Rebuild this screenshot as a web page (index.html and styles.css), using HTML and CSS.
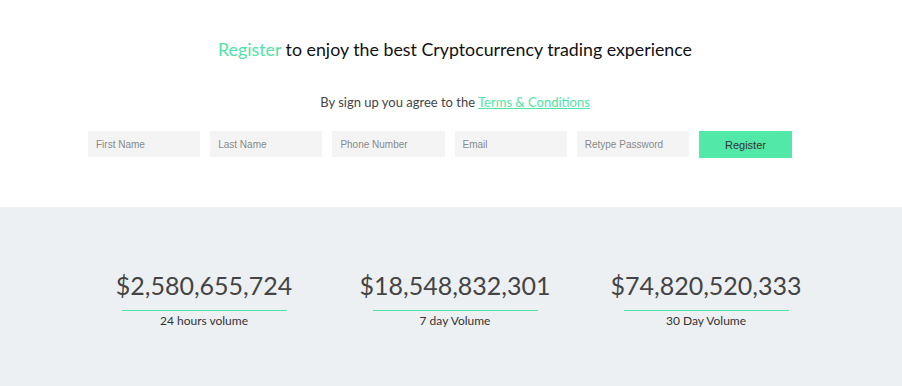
FILE: index.html
```html
<!DOCTYPE html>
<html lang="en">
<head>
    <meta charset="UTF-8">
    <meta name="viewport" content="width=device-width, initial-scale=1.0">
    <title>Register</title>
    <link rel="stylesheet" href="styles.css">
</head>
<body>
<div class="signup">
    <h2 class="signup-title"><span class="green">Register</span> to enjoy the best Cryptocurrency trading experience</h2>
    <p class="signup-terms">By sign up you agree to the <a href="#">Terms &amp; Conditions</a></p>
    <form class="signup-form">
        <input type="text" placeholder="First Name">
        <input type="text" placeholder="Last Name">
        <input type="text" placeholder="Phone Number">
        <input type="text" placeholder="Email">
        <input type="password" placeholder="Retype Password">
        <button type="button">Register</button>
    </form>
</div>
<div class="stats">
    <div class="stat">
        <div class="stat-value">$2,580,655,724</div>
        <div class="stat-label">24 hours volume</div>
    </div>
    <div class="stat">
        <div class="stat-value">$18,548,832,301</div>
        <div class="stat-label">7 day Volume</div>
    </div>
    <div class="stat">
        <div class="stat-value">$74,820,520,333</div>
        <div class="stat-label">30 Day Volume</div>
    </div>
</div>
</body>
</html>
```

FILE: styles.css
```css
body {
    margin: 0;
    font-family: Lato, "Open Sans", sans-serif;
    background-color: #fff;
    color: #222;
}
.green {
    color: #50e3a4;
}
.signup {
    height: 207px;
    box-sizing: border-box;
    padding-top: 38px;
    padding-left: 8px;
    text-align: center;
}
.signup-title {
    margin: 0;
    font-size: 17.8px;
    font-weight: 400;
    line-height: 22px;
    color: #111;
}
.signup-terms {
    margin: 34px 0 0;
    font-size: 13px;
    line-height: 16px;
    color: #444;
}
.signup-terms a {
    color: #50e3a4;
}
.signup-form {
    display: flex;
    gap: 10px;
    margin-top: 21px;
    padding-left: 80px;
}
.signup-form input {
    width: 112.2px;
    height: 26px;
    box-sizing: border-box;
    border: none;
    background-color: #f4f4f4;
    padding: 0 8px;
    font-family: "Liberation Sans", Arial, sans-serif;
    font-size: 10px;
    color: #333;
}
.signup-form input::placeholder {
    color: #8a8a8a;
}
.signup-form button {
    width: 93px;
    height: 27px;
    border: none;
    background-color: #52e8a8;
    font-family: "Liberation Sans", Arial, sans-serif;
    font-size: 11px;
    color: #333;
    cursor: pointer;
}
.stats {
    height: 179px;
    background-color: #edf0f3;
    display: flex;
    justify-content: center;
    padding-left: 8px;
    padding-top: 62px;
    box-sizing: border-box;
}
.stat {
    width: 251px;
    display: flex;
    flex-direction: column;
    align-items: center;
}
.stat-value {
    font-size: 25px;
    line-height: 32px;
    color: #444;
}
.stat-label {
    width: 165px;
    margin-top: 9px;
    border-top: 1px solid #50e3a4;
    padding-top: 2px;
    text-align: center;
    font-size: 12px;
    line-height: 15px;
    color: #333;
}
```
